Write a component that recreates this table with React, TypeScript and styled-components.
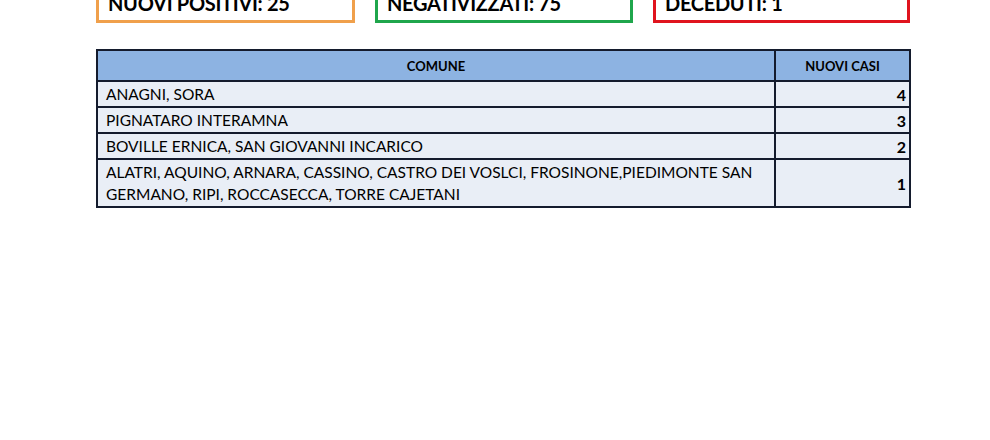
import styled, { createGlobalStyle } from "styled-components";

const GlobalStyle = createGlobalStyle`
  html, body {
    margin: 0;
    padding: 0;
    background: #ffffff;
    overflow: hidden;
  }
  body {
    font-family: Lato, "Open Sans", "Liberation Sans", sans-serif;
    color: #000000;
  }
`;

type Tone = "orange" | "green" | "red";

const toneColors: Record<Tone, string> = {
  orange: "#f0a04b",
  green: "#1fa64c",
  red: "#e0141e"
};

const summary: { label: string; tone: Tone; width: number }[] = [
  { label: "NUOVI POSITIVI: 25", tone: "orange", width: 259 },
  { label: "NEGATIVIZZATI: 75", tone: "green", width: 258 },
  { label: "DECEDUTI: 1", tone: "red", width: 257 }
];

const rows = [
  { comuni: "ANAGNI, SORA", casi: 4 },
  { comuni: "PIGNATARO INTERAMNA", casi: 3 },
  { comuni: "BOVILLE ERNICA, SAN GIOVANNI INCARICO", casi: 2 },
  {
    comuni:
      "ALATRI, AQUINO, ARNARA, CASSINO, CASTRO DEI VOSLCI, FROSINONE,PIEDIMONTE SAN GERMANO, RIPI, ROCCASECCA, TORRE CAJETANI",
    casi: 1
  }
];

const App = () => {
  return (
    <Page>
      <GlobalStyle />
      <SummaryRow>
        {summary.map(({ label, tone, width }) => (
          <SummaryBox key={label} $tone={tone} $width={width}>
            {label}
          </SummaryBox>
        ))}
      </SummaryRow>
      <Table>
        <thead>
          <tr>
            <HeadCell>COMUNE</HeadCell>
            <HeadCell $narrow>NUOVI CASI</HeadCell>
          </tr>
        </thead>
        <tbody>
          {rows.map(({ comuni, casi }) => (
            <tr key={comuni}>
              <NameCell>{comuni}</NameCell>
              <CountCell>{casi}</CountCell>
            </tr>
          ))}
        </tbody>
      </Table>
    </Page>
  );
};

export default App;

const Page = styled.div`
  width: 990px;
  height: 440px;
  padding-left: 96px;
  box-sizing: border-box;
`;

const SummaryRow = styled.div`
  display: flex;
  gap: 20px;
  margin-top: -22px;
`;

const SummaryBox = styled.div<{ $tone: Tone; $width: number }>`
  flex: 0 0 auto;
  width: ${({ $width }) => $width}px;
  height: 45px;
  box-sizing: border-box;
  border: 3px solid ${({ $tone }) => toneColors[$tone]};
  padding: 10px 0 0 9px;
  font-size: 20px;
  font-weight: 700;
  line-height: 24px;
  letter-spacing: -0.3px;
`;

const Table = styled.table`
  margin-top: 26px;
  width: 815px;
  border-collapse: collapse;
  table-layout: fixed;
  font-size: 15.5px;
  letter-spacing: 0;
`;

const HeadCell = styled.th<{ $narrow?: boolean }>`
  width: ${({ $narrow }) => ($narrow ? "133px" : "auto")};
  height: 29px;
  padding: 0;
  background: #8db3e2;
  border: 2px solid #141b2d;
  font-size: 13px;
  font-weight: 700;
  text-align: center;
  vertical-align: middle;
`;

const NameCell = styled.td`
  padding: 1px 8px 1px 8px;
  background: #e9eef6;
  border: 2px solid #141b2d;
  line-height: 22px;
  text-align: left;
  vertical-align: middle;
`;

const CountCell = styled.td`
  padding: 0 3px 0 0;
  background: #e9eef6;
  border: 2px solid #141b2d;
  font-size: 16px;
  font-weight: 700;
  text-align: right;
  vertical-align: middle;
`;
